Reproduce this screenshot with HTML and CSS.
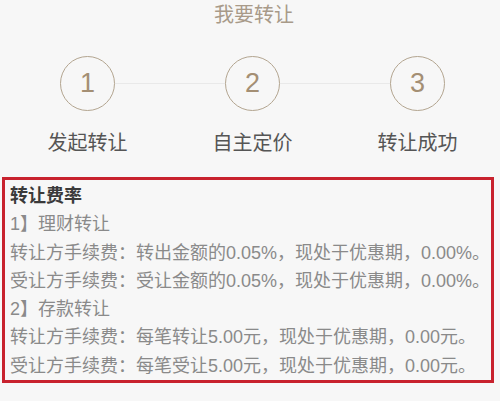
FILE: index.html
```html
<!DOCTYPE html>
<html lang="zh-CN">
<head>
<meta charset="utf-8">
<link rel="stylesheet" href="styles.css">
</head>
<body>
<div class="page">
  <div class="title">我要转让</div>
  <div class="steps">
    <div class="step">
      <div class="circle-row"><span class="line line-hidden"></span><div class="circle">1</div><span class="line"></span></div>
      <div class="label">发起转让</div>
    </div>
    <div class="step">
      <div class="circle-row"><span class="line"></span><div class="circle">2</div><span class="line"></span></div>
      <div class="label">自主定价</div>
    </div>
    <div class="step">
      <div class="circle-row"><span class="line"></span><div class="circle">3</div><span class="line line-hidden"></span></div>
      <div class="label">转让成功</div>
    </div>
  </div>
  <div class="box">
    <div class="row head">转让费率</div>
    <div class="row">1】理财转让</div>
    <div class="row">转让方手续费：转出金额的0.05%，现处于优惠期，0.00%。</div>
    <div class="row">受让方手续费：受让金额的0.05%，现处于优惠期，0.00%。</div>
    <div class="row">2】存款转让</div>
    <div class="row">转让方手续费：每笔转让5.00元，现处于优惠期，0.00元。</div>
    <div class="row">受让方手续费：每笔受让5.00元，现处于优惠期，0.00元。</div>
  </div>
</div>
</body>
</html>
```
FILE: styles.css
```css
html, body {
  margin: 0;
  padding: 0;
  background: #f7f7f7;
}
body {
  font-family: "Liberation Sans", "Noto Sans CJK SC", sans-serif;
  width: 500px;
  height: 401px;
  overflow: hidden;
}
.page {
  display: flex;
  flex-direction: column;
}
.title {
  text-align: center;
  font-size: 20px;
  line-height: 30px;
  color: #a89a89;
  padding-left: 8px;
}
.steps {
  display: flex;
  padding-left: 5px;
  margin-top: 26px;
}
.step {
  width: 166px;
  display: flex;
  flex-direction: column;
  align-items: center;
}
.circle-row {
  width: 100%;
  display: flex;
  align-items: center;
}
.line {
  flex: 1;
  height: 1px;
  background: #e9e9e9;
}
.line-hidden {
  background: transparent;
}
.circle {
  width: 53px;
  height: 53px;
  border: 1.5px solid #b3a590;
  border-radius: 50%;
  display: flex;
  align-items: center;
  justify-content: center;
  font-size: 27px;
  color: #a48f74;
}
.label {
  margin-top: 18px;
  font-size: 20px;
  line-height: 28px;
  color: #555555;
}
.box {
  margin: 20px 0 0 2px;
  width: 481px;
  border: 3px solid #c8222e;
  padding: 2px 0 0 5px;
}
.row {
  font-size: 18px;
  line-height: 28.3px;
  color: #8a8a8a;
  white-space: nowrap;
}
.row.head {
  color: #3a3a3a;
  font-weight: bold;
}
```
